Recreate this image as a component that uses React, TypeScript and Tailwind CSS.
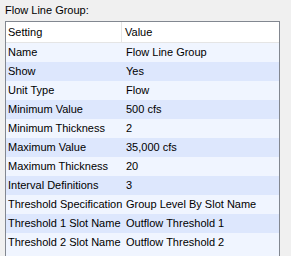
const rows: [string, string][] = [
  ["Name", "Flow Line Group"],
  ["Show", "Yes"],
  ["Unit Type", "Flow"],
  ["Minimum Value", "500 cfs"],
  ["Minimum Thickness", "2"],
  ["Maximum Value", "35,000 cfs"],
  ["Maximum Thickness", "20"],
  ["Interval Definitions", "3"],
  ["Threshold Specification", "Group Level By Slot Name"],
  ["Threshold 1 Slot Name", "Outflow Threshold 1"],
  ["Threshold 2 Slot Name", "Outflow Threshold 2"],
];

export default function App() {
  return (
    <div className="h-[256px] w-[291px] overflow-hidden bg-[#f0f0f0] font-['Liberation_Sans',sans-serif] text-[11px] text-black">
      <div className="px-[5px] pt-[3px] leading-[14px]">Flow Line Group:</div>
      <div className="ml-[5px] mt-[4px] h-[260px] w-[275px] border border-[#828790] bg-[#f0f5ff]">
        <div className="flex h-[21px] items-center border-b border-[#e5e5e5] bg-white">
          <div className="h-full w-[116px] border-r border-[#e5e5e5] pl-[2px] leading-[20px]">Setting</div>
          <div className="pl-[3px]">Value</div>
        </div>
        {rows.map(([k, v], i) => (
          <div
            key={k}
            className={`flex h-[19px] items-center ${i % 2 === 1 ? "bg-[#dde7fd]" : "bg-[#f0f5ff]"}`}
          >
            <div className="w-[117px] pl-[2px]">{k}</div>
            <div className="pl-[3px]">{v}</div>
          </div>
        ))}
      </div>
    </div>
  );
}
